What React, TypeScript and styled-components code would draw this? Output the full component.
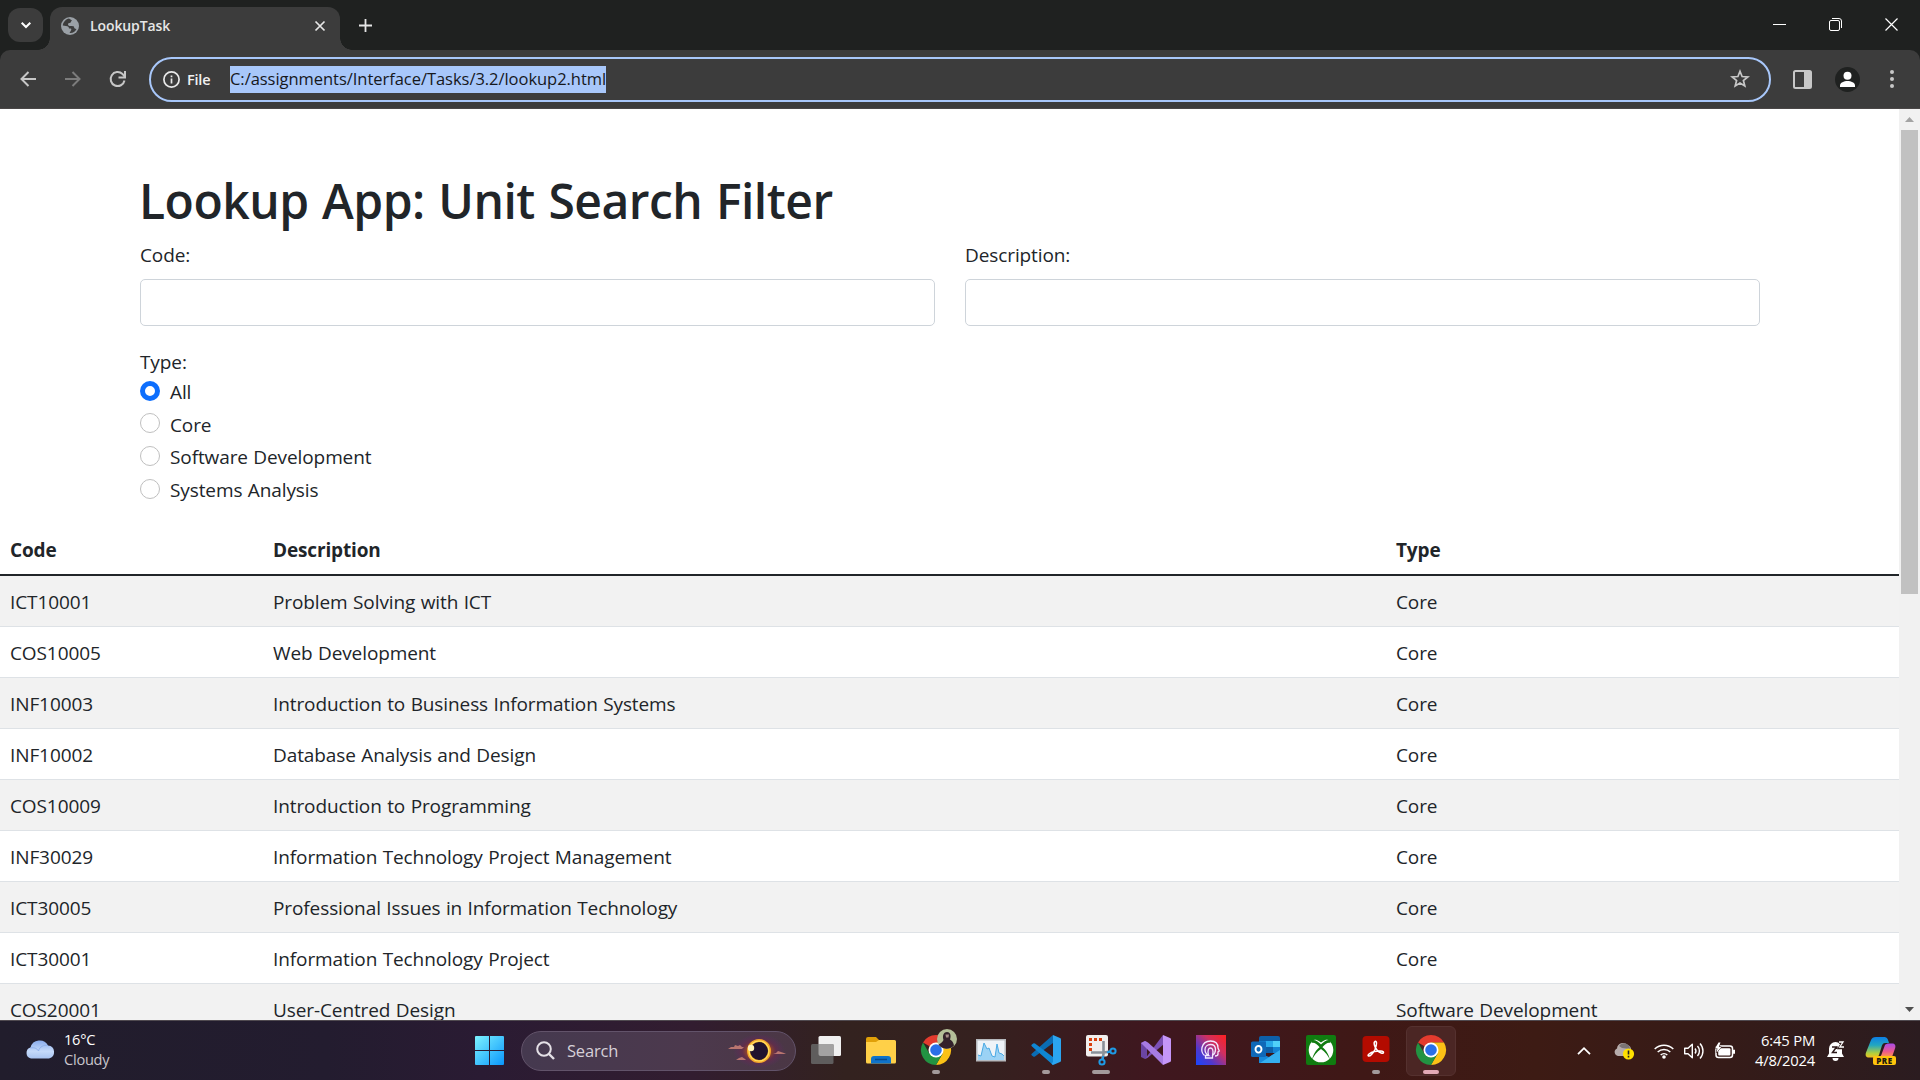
import React from "react";
import styled, { createGlobalStyle } from "styled-components";

const GlobalStyle = createGlobalStyle`
  *, *::before, *::after { box-sizing: border-box; }
  body { margin: 0; background: #fff; overflow: hidden; }
`;

const Screen = styled.div`
  width: 1920px;
  height: 1080px;
  display: grid;
  grid-template-rows: 50px 59px 911px 60px;
  overflow: hidden;
  background: #1f2120;
  font-family: "Open Sans", "Noto Sans", sans-serif;
  color: #212529;
`;

/* ---------- Browser chrome ---------- */

const TitleBar = styled.header`
  display: flex;
  align-items: flex-start;
  background: #1f2120;
  color: #e6e6e6;
`;

const TabSearch = styled.button`
  display: grid;
  place-items: center;
  width: 35px;
  height: 34px;
  margin: 8px 7px 0 8px;
  padding: 0;
  border: 0;
  border-radius: 12px;
  background: #3c3c3c;
  color: #fff;
`;

const Tab = styled.div`
  position: relative;
  display: flex;
  align-items: center;
  width: 290px;
  height: 43px;
  margin-top: 7px;
  padding: 0 15px 6px 11px;
  border-radius: 12px 12px 0 0;
  background: #3c3c3c;
  &::before, &::after {
    content: "";
    position: absolute;
    bottom: 0;
    width: 12px;
    height: 12px;
  }
  &::before { left: -12px; background: radial-gradient(circle at 0 0, transparent 11.5px, #3c3c3c 12px); }
  &::after { right: -12px; background: radial-gradient(circle at 100% 0, transparent 11.5px, #3c3c3c 12px); }
`;

const TabTitle = styled.span`
  flex: 1;
  margin-left: 11px;
  font-size: 14px;
  font-weight: 600;
  letter-spacing: -0.1px;
  line-height: 20px;
`;

const NewTab = styled.div`
  display: grid;
  place-items: center;
  width: 50px;
  height: 50px;
`;

const WindowControls = styled.div`
  display: flex;
  align-items: center;
  gap: 43px;
  height: 49px;
  margin-left: auto;
  padding-right: 22px;
`;

const Toolbar = styled.nav`
  display: flex;
  align-items: center;
  background: #3c3c3c;
  border-bottom: 1px solid #4a4747;
  border-radius: 10px 10px 0 0;
  color: #c7c7c7;
`;

const NavButtons = styled.div`
  display: flex;
  align-items: center;
  gap: 25px;
  width: 149px;
  padding-left: 18px;
`;

const Omnibox = styled.div`
  display: flex;
  align-items: center;
  width: 1622px;
  height: 45px;
  padding: 0 19px 0 12px;
  border: 2.5px solid #a8c7fa;
  border-radius: 23px;
`;

const Scheme = styled.span`
  width: 43px;
  margin-left: 7px;
  color: #f1f1f1;
  font-size: 14.5px;
  font-weight: 600;
  letter-spacing: -0.2px;
`;

const Url = styled.span`
  height: 27px;
  background: #a8c7fa;
  color: #16181c;
  font-size: 16.5px;
  letter-spacing: -0.04px;
  line-height: 26px;
  white-space: nowrap;
`;

const StarSlot = styled.span`
  display: flex;
  margin-left: auto;
`;

const Actions = styled.div`
  display: flex;
  align-items: center;
  flex: 1;
  padding-left: 22px;
`;

const Avatar = styled.span`
  display: grid;
  width: 25px;
  height: 25px;
  margin: 0 30px 0 23px;
  border-radius: 50%;
  background: #1f2120;
`;

/* ---------- Page ---------- */

const Viewport = styled.div`
  display: grid;
  grid-template-columns: 1899px 21px;
  min-height: 0;
`;

const Page = styled.main`
  overflow: hidden;
  background: #fff;
  font-size: 19px;
  line-height: 30px;
  letter-spacing: -0.1px;
  word-spacing: 0.6px;
`;

const Form = styled.section`
  padding: 62px 139px 0 140px;
`;

const Heading = styled.h1`
  margin: 0 0 9px -1px;
  font-size: 48px;
  font-weight: 600;
  letter-spacing: -0.5px;
  word-spacing: 1.6px;
  line-height: 60px;
`;

const FieldRow = styled.div`
  display: grid;
  grid-template-columns: 1fr 1fr;
  gap: 30px;
`;

const Field = styled.label`
  display: grid;
  gap: 9px;
`;

const TextInput = styled.input`
  width: 100%;
  height: 47px;
  border: 1px solid #ced4da;
  border-radius: 5px;
  background: #fff;
`;

const TypeGroup = styled.div`
  margin-top: 21px;
`;

const TypeLabel = styled.div`
  height: 29px;
`;

const Option = styled.label`
  display: flex;
  align-items: center;
  gap: 10px;
  height: 32.6px;
`;

const Radio = styled.span<{ $on?: boolean }>`
  width: 20px;
  height: 20px;
  margin-top: -3px;
  border: ${(p) => (p.$on ? "5px solid #0d6efd" : "1px solid #bfbfbf")};
  border-radius: 50%;
  background: #fff;
`;

const Table = styled.table`
  width: 100%;
  margin-top: 18px;
  border-collapse: separate;
  border-spacing: 0;
  table-layout: fixed;
`;

const HeadCell = styled.th<{ $w?: number }>`
  width: ${(p) => (p.$w ? `${p.$w}px` : "auto")};
  height: 52px;
  padding: 2px 10px 0;
  border-bottom: 2px solid #212529;
  font-weight: 700;
  text-align: left;
  letter-spacing: -0.15px;
`;

const BodyRow = styled.tr`
  &:nth-child(odd) { background: #f2f2f2; }
`;

const Cell = styled.td`
  height: 51px;
  padding: 2px 10px 0;
  border-bottom: 1px solid #dee2e6;
  white-space: nowrap;
`;

const ScrollTrack = styled.div`
  display: flex;
  flex-direction: column;
  align-items: center;
  background: #f1f1f1;
`;

const Thumb = styled.div`
  width: 17px;
  height: 464px;
  margin-bottom: auto;
  background: #c1c1c1;
`;

const ArrowSlot = styled.div`
  display: grid;
  place-items: center;
  height: 21px;
`;

/* ---------- Taskbar ---------- */

const Taskbar = styled.footer`
  display: grid;
  grid-template-columns: 462px 1fr auto;
  border-top: 1px solid #504a50;
  background: linear-gradient(90deg, #211d2c 0%, #231c2f 17%, #2a1b33 25%, #321d30 36%, #33221f 44%, #35211f 51%, #3f171f 60%, #3f1816 71%, #3d1b14 80%, #351b18 90%, #2b1c20 100%);
  color: #fff;
`;

const Weather = styled.div`
  display: flex;
  align-items: center;
  gap: 9px;
  padding: 0 0 3px 25px;
`;

const WeatherText = styled.div`
  font-size: 14.6px;
  line-height: 20px;
  letter-spacing: -0.25px;
`;

const Dim = styled.div`
  color: #c9c6cc;
`;

const Apps = styled.div`
  display: flex;
  align-items: center;
`;

const StartSlot = styled.span`
  display: grid;
  place-items: center;
  width: 55px;
`;

const SearchBox = styled.div`
  display: flex;
  align-items: center;
  width: 275px;
  height: 40px;
  margin: 0 2px 0 4px;
  padding: 0 8px 0 14px;
  border: 1px solid #62536a;
  border-radius: 20px;
  background: linear-gradient(90deg, #45394f, #4c394d 60%, #4b3745);
  color: #d6d0d8;
  font-size: 16.5px;
  letter-spacing: -0.2px;
`;

const SearchLabel = styled.span`
  flex: 1;
  margin-left: 12px;
`;

const AppButton = styled.span<{ $active?: boolean }>`
  display: flex;
  flex-direction: column;
  align-items: center;
  width: 50px;
  height: 50px;
  margin: 0 2.5px;
  padding-top: 8px;
  border: 1px solid ${(p) => (p.$active ? "#55312f" : "transparent")};
  border-radius: 6px;
  background: ${(p) => (p.$active ? "#4b2624" : "transparent")};
`;

const Indicator = styled.i<{ $w: number; $color?: string }>`
  width: ${(p) => p.$w}px;
  height: 4px;
  margin-top: 5px;
  border-radius: 2px;
  background: ${(p) => p.$color ?? "#a39a9b"};
`;

const Glyph = styled.svg`
  display: block;
  flex: none;
  overflow: visible;
`;

const Tray = styled.div`
  display: flex;
  align-items: center;
  padding-right: 24px;
`;

const TraySlot = styled.span<{ $w: number; $after?: number }>`
  display: grid;
  place-items: center;
  width: ${(p) => p.$w}px;
  margin-right: ${(p) => p.$after ?? 0}px;
`;

const Clock = styled.div`
  width: 75px;
  padding-bottom: 2px;
  font-size: 14.8px;
  line-height: 20px;
  letter-spacing: -0.2px;
  text-align: right;
  white-space: nowrap;
`;

/* ---------- Drawings ---------- */

const line = { fill: "none", stroke: "currentColor", strokeWidth: 2 } as const;

const ChromeLogo = ({ badge }: { badge?: boolean }) => (
  <Glyph width="30" height="30" viewBox="0 0 30 30">
    <path d="M15 15 2 7.5A15 15 0 0 1 28 7.5L15 7.5Z" fill="#e33b2e" />
    <path d="M15 7.5H28A15 15 0 0 1 15 30L21.5 18.7Z" fill="#fbc116" />
    <path d="M2 7.5A15 15 0 0 0 15 30L21.5 18.8 8.5 18.8Z" fill="#229342" />
    <circle cx="15" cy="15" r="7.5" fill="#fff" />
    <circle cx="15" cy="15" r="5.8" fill="#2a6fe8" />
    {badge && (
      <g>
        <circle cx="26" cy="4" r="10" fill="#b4bf98" />
        <path d="M17.500 9.500c2-.5 4-2.500 5-4.500-1.500-5 .5-8 3.500-8s4.500 3 3 7.500c2 1 3.500 3 4 6A10 10 0 0 1 17.500 9.500z" fill="#33212a" />
        <path d="M24.500-.5h3.500l-.5 3h-2.500z" fill="#a58c86" />
      </g>
    )}
  </Glyph>
);

const StartLogo = () => (
  <Glyph width="29" height="29" viewBox="0 0 29 29">
    <defs>
      <linearGradient id="win" x1="0" y1="0" x2="29" y2="29" gradientUnits="userSpaceOnUse">
        <stop stopColor="#7df3ff" />
        <stop offset="1" stopColor="#0a96fb" />
      </linearGradient>
    </defs>
    <path d="M0 1a1 1 0 0 1 1-1h13v14H0zM15 0h13a1 1 0 0 1 1 1v13H15zM0 15h14v14H1a1 1 0 0 1-1-1zM15 15h14v13a1 1 0 0 1-1 1H15z" fill="url(#win)" />
  </Glyph>
);

const Cloud = () => (
  <Glyph width="30" height="20" viewBox="0 0 30 20">
    <defs>
      <linearGradient id="cl" x1="0" y1="0" x2="0" y2="1">
        <stop stopColor="#8aaced" />
        <stop offset=".6" stopColor="#c5dafa" />
        <stop offset="1" stopColor="#a9c4f1" />
      </linearGradient>
    </defs>
    <path d="M6 19.5a5.700 5.700 0 0 1-.5-11A9.500 9.500 0 0 1 23 6.500a6.600 6.600 0 0 1 1 13z" fill="url(#cl)" />
    <path d="M5.500 9c4-1 7 1 8 3 1-4 5-6.500 9.500-5.500" fill="none" stroke="#8fb0ec" strokeWidth="1" />
  </Glyph>
);

const Eclipse = () => (
  <Glyph width="60" height="32" viewBox="0 0 60 32">
    <defs>
      <radialGradient id="glow">
        <stop offset=".4" stopColor="#a8501f" />
        <stop offset=".65" stopColor="#6a2a4a" stopOpacity=".7" />
        <stop offset="1" stopColor="#5a2a6a" stopOpacity="0" />
      </radialGradient>
    </defs>
    <ellipse cx="32" cy="16" rx="26" ry="17" fill="url(#glow)" />
    <circle cx="32" cy="16" r="10.500" fill="#21122e" stroke="#f4a52a" strokeWidth="3" />
    <circle cx="32" cy="16" r="10" fill="none" stroke="#ffe05e" strokeWidth="1.200" />
    <circle cx="24" cy="13" r="3.200" fill="#fff3b8" />
    <path d="M1 14l3-2h3l1-2 3 1 2-1 2 2h2l-2 2zM9 25l3-2 3-1 3 2 1 1zM46 19l3-1 2-2 3 1 3 1 2 1z" fill="#b9756f" />
  </Glyph>
);

const TaskView = () => (
  <Glyph width="30" height="30" viewBox="0 0 30 30">
    <rect x="7.500" y="1" width="22.500" height="20" rx="1.500" fill="#f0f0f0" />
    <rect x="0" y="9" width="22.500" height="20" rx="1.500" fill="#5f5d5d" />
    <path d="M7.500 9h15v12h-13a2 2 0 0 1-2-2z" fill="#a3a2a2" />
  </Glyph>
);

const Folder = () => (
  <Glyph width="30" height="30" viewBox="0 0 30 30">
    <path d="M0 4a2 2 0 0 1 2-2h8l3 3v4H0z" fill="#e0a008" />
    <path d="M0 7h10l3-2h15.500a1.500 1.500 0 0 1 1.500 1.500V27a1.500 1.500 0 0 1-1.500 1.500h-27A1.500 1.500 0 0 1 0 27z" fill="#ffd048" />
    <path d="M5 28.500V24a3 3 0 0 1 3-3h14a3 3 0 0 1 3 3v4.500z" fill="#0f73c9" />
    <path d="M9 24.500h12" stroke="#084a8c" strokeWidth="1.500" />
  </Glyph>
);

const PerfMonitor = () => (
  <Glyph width="30" height="30" viewBox="0 0 30 30">
    <rect x=".750" y="4.750" width="28.500" height="21" fill="#eef3f8" stroke="#b6b9bd" strokeWidth="1.500" />
    <path d="M2 25V20l3 1 3-13 3 6 2-1 3 8 3 1 2-13 2 9 3 1 2 2v4z" fill="#9bd2f5" />
    <path d="M2 20l3 1 3-13 3 6 2-1 3 8 3 1 2-13 2 9 3 1 2 2" fill="none" stroke="#4aa9e4" />
  </Glyph>
);

const VSCode = () => (
  <Glyph width="30" height="30" viewBox="0 0 30 30">
    <path d="M1 18.500 22 0v8L4 21.500q-1 .5-1.800 0L.6 20.200q-.8-.8.4-1.700z" fill="#0a6cb4" />
    <path d="M1 11.500 22 30v-8L4 8.500q-1-.5-1.800 0L.6 9.800q-.8.800.4 1.700z" fill="#0f86d2" />
    <path d="M22 0l7 3a1.500 1.500 0 0 1 1 1.500v21a1.500 1.500 0 0 1-1 1.500l-7 3-1.500-1.200L22 27z" fill="#2ba5f0" />
  </Glyph>
);

const Snip = () => (
  <Glyph width="30" height="30" viewBox="0 0 30 30">
    <rect width="22" height="21.500" rx="2" fill="#f1efee" />
    <path d="M3 3h3v3H3zM8 3h3v3H8zM13 3h3v3h-3zM3 8h3v3H3zM3 13h3v3H3z" fill="#d8400f" />
    <path d="M17.500 6v13l-1 5M5 17.500h13l6-1" fill="none" stroke="#8a9199" strokeWidth="2.600" />
    <circle cx="27" cy="16" r="2.600" fill="none" stroke="#1e9be6" strokeWidth="2" />
    <circle cx="16" cy="27" r="2.600" fill="none" stroke="#1e9be6" strokeWidth="2" />
    <path d="M21 17.500l3-1M17.500 21l-1 3" stroke="#1e9be6" strokeWidth="2" />
  </Glyph>
);

const VisualStudio = () => (
  <Glyph width="30" height="30" viewBox="0 0 30 30">
    <path d="M0 8l4-2 2 1v16l-2 1-4-2z" fill="#6b45a3" />
    <path d="M4 24 22 0l1 9L7 22.500z" fill="#7b50b5" />
    <path d="M0 8l4-2 3 1.500L22 21v9z" fill="#a77be2" />
    <path d="M22 0l7 3a1.500 1.500 0 0 1 1 1.500v21a1.500 1.500 0 0 1-1 1.500l-7 3z" fill="#c596f8" />
  </Glyph>
);

const Assistant = () => (
  <Glyph width="30" height="30" viewBox="0 0 30 30">
    <defs>
      <linearGradient id="as" x1="0" y1="30" x2="30" y2="0" gradientUnits="userSpaceOnUse">
        <stop stopColor="#1746ff" />
        <stop offset=".3" stopColor="#5038cc" />
        <stop offset=".65" stopColor="#d03060" />
        <stop offset="1" stopColor="#ff2020" />
      </linearGradient>
    </defs>
    <path d="M0 0h30v30H0z" fill="url(#as)" />
    <path d="M8.500 20.500C5.500 18 5.500 15 6 12.500 7 8.500 10.500 6 14.500 6 19.500 6 22 9 22 13l1.300 3-1.300.8v2.200c0 1.500-1 2-3 2M12.500 23h-3v-2.500h3c-2.500-1.500-3.500-4-3.500-6 0-3 2.500-5 5.500-5s5 2 5 5c0 2.500-1 4.500-3 6v2.500h-4M12.500 20.500c-1.500-6 .5-7.500 2-7.500s3.500 1.500 2 7.500" fill="none" stroke="#f3e8ff" strokeWidth="1.300" />
  </Glyph>
);

const Outlook = () => (
  <Glyph width="30" height="30" viewBox="0 0 30 30">
    <path d="M8 3a2 2 0 0 1 2-2h17a2 2 0 0 1 2 2v15H8z" fill="#0d5fa8" />
    <path d="M8 6h7v6H8zM22 12h7v6h-7z" fill="#1482d3" />
    <path d="M15 6h7v6h-7z" fill="#28a8ea" />
    <path d="M22 6h7v6h-7z" fill="#50d0f8" />
    <path d="M8 28V18l10 4 11-7v12a1 1 0 0 1-1 1z" fill="#1688d8" />
    <path d="M29 15v12a1 1 0 0 1-1 1H9z" fill="#35b0f0" />
    <rect x="0" y="6.500" width="15" height="15.500" rx="1.500" fill="#0f68b8" />
    <ellipse cx="7.500" cy="14.300" rx="3" ry="3.300" fill="none" stroke="#fff" strokeWidth="1.900" />
  </Glyph>
);

const Xbox = () => (
  <Glyph width="30" height="30" viewBox="0 0 30 30">
    <rect width="30" height="30" rx="2" fill="#107c10" />
    <circle cx="15" cy="15" r="12.300" fill="#fff" />
    <path d="M7.500 4.500C10 4 13 6 15 7.500 17 6 20 4 22.500 4.500 19 1 11 1 7.500 4.500z" fill="#107c10" />
    <path d="M6 25.500C7 18.500 11 14 15 11c4 3 8 7.500 9 14.500C22.500 20.500 19 17 15 14 11 17 7.500 20.500 6 25.500z" fill="#107c10" />
    <path d="M5.500 6.500C9 5.500 12.500 8.500 15 11.500M24.500 6.500C21 5.500 17.500 8.500 15 11.500" fill="none" stroke="#107c10" strokeWidth="2.800" />
  </Glyph>
);

const Acrobat = () => (
  <Glyph width="28" height="30" viewBox="0 0 28 30">
    <rect x=".5" y="1" width="27" height="26" rx="4" fill="#b30b00" />
    <path d="M13 6.500c2-1 2 3 0 8-2 4-5 7-6.500 6.500s1-3.500 6-4.500c5-1 9-.5 9 1s-4 .5-6.500-2.500-3.800-7.500-2-8.500z" fill="none" stroke="#fff" strokeWidth="1.500" />
  </Glyph>
);

const OneDrive = () => (
  <Glyph width="20" height="18" viewBox="0 0 20 18">
    <path d="M4 14a4 4 0 0 1-1-7.600A6 6 0 0 1 13.500 3 5 5 0 0 1 17 8l-6 6z" fill="#b6acab" />
    <path d="M5 4a6 6 0 0 1 11 3l-8-1z" fill="#7b7474" />
    <circle cx="14.500" cy="12" r="5.600" fill="#ffe000" />
    <path d="M14.500 8.500v4M14.500 13.800v1.700" stroke="#222" strokeWidth="1.600" />
  </Glyph>
);

const Wifi = () => (
  <Glyph width="20" height="16" viewBox="0 0 20 16">
    <path d="M.7 6a13.200 13.200 0 0 1 18.600 0M3.700 9a9 9 0 0 1 12.600 0M6.700 12a4.800 4.800 0 0 1 6.600 0" {...line} strokeWidth={1.5} />
    <circle cx="10" cy="14" r="1.800" fill="currentColor" />
  </Glyph>
);

const Volume = () => (
  <Glyph width="20" height="18" viewBox="0 0 20 18">
    <path d="M.700 6.300h3.300L8.300 2.300v13.500L4 11.800H.7z M11 6.500a4 4 0 0 1 0 5M13.500 4a7.500 7.500 0 0 1 0 10M16 1.500a11 11 0 0 1 0 15" {...line} strokeWidth={1.400} strokeLinejoin="round" />
  </Glyph>
);

const Battery = () => (
  <Glyph width="20" height="16" viewBox="0 0 20 16">
    <rect x="1" y="3" width="16.500" height="11.500" rx="2.500" {...line} strokeWidth={1.500} />
    <rect x="3.200" y="5.200" width="12.200" height="7.200" rx="1" fill="currentColor" />
    <path d="M19 6.800v4" stroke="currentColor" strokeWidth="2" />
    <path d="M3.500-.5 0 5.500h2.500L1.300 10 6.300 4H3.800L5.500-.5z" fill="currentColor" stroke="#351b18" strokeWidth="1" paintOrder="stroke" />
  </Glyph>
);

const Bell = () => (
  <Glyph width="18" height="20" viewBox="0 0 18 20">
    <path d="M2 7.500a6.500 6.500 0 0 1 13 0v5L17 16H0l2-3.500zM5.500 17h6a3 3 0 0 1-6 0z" fill="currentColor" />
    <path d="M12 1H16.500L13 6.500H17" fill="none" stroke="#33201f" strokeWidth="3.400" />
    <path d="M12 1H16L12.800 6H17" fill="none" stroke="#fff" strokeWidth="1.300" />
    <path d="M5 6H9.500L5.500 11.500H10M9 5.500l1.500 2" fill="none" stroke="#2e1a1b" strokeWidth="1.500" />
  </Glyph>
);

const PreTag = styled.span`
  position: absolute;
  left: 7px;
  top: 19px;
  width: 23px;
  height: 9px;
  border-radius: 2px;
  background: #ffc40c;
  color: #201a10;
  font-size: 8px;
  font-weight: 800;
  line-height: 9px;
  letter-spacing: 0.6px;
  text-align: center;
`;

const CopilotBox = styled.span`
  position: relative;
  width: 30px;
  height: 28px;
`;

const Copilot = () => (
  <CopilotBox>
    <Glyph width="30" height="30" viewBox="0 0 30 30">
      <defs>
        <linearGradient id="ca" x1="0" y1="0" x2="0" y2="1">
          <stop stopColor="#0d7fe6" />
          <stop offset=".4" stopColor="#22a7c0" />
          <stop offset=".8" stopColor="#b5cf3a" />
          <stop offset="1" stopColor="#f0c020" />
        </linearGradient>
        <linearGradient id="cb" x1="0" y1="0" x2="0" y2="1">
          <stop stopColor="#a84be8" />
          <stop offset=".6" stopColor="#ee5a8c" />
          <stop offset="1" stopColor="#ff9a4a" />
        </linearGradient>
      </defs>
      <path d="M5 3c1-2 2-3 5-3h8c3 0 4 2 5 6h-4c-2 0-3 2-3.500 4L13 18c-1 2-2 2.500-4 2.500H3c-3 0-4-2-3-5z" fill="url(#ca)" />
      <path d="M19 8c1-1 2-1.500 4-1.500h3c3 0 4 2 3 5L26 20h-13c2-1 2.500-2 3-4z" fill="url(#cb)" />
    </Glyph>
    <PreTag>PRE</PreTag>
  </CopilotBox>
);

/* ---------- Data ---------- */

const units: [string, string, string][] = [
  ["ICT10001", "Problem Solving with ICT", "Core"],
  ["COS10005", "Web Development", "Core"],
  ["INF10003", "Introduction to Business Information Systems", "Core"],
  ["INF10002", "Database Analysis and Design", "Core"],
  ["COS10009", "Introduction to Programming", "Core"],
  ["INF30029", "Information Technology Project Management", "Core"],
  ["ICT30005", "Professional Issues in Information Technology", "Core"],
  ["ICT30001", "Information Technology Project", "Core"],
  ["COS20001", "User-Centred Design", "Software Development"],
];

const types = ["All", "Core", "Software Development", "Systems Analysis"];

const apps: { icon: React.ReactNode; bar?: number; active?: boolean }[] = [
  { icon: <TaskView /> },
  { icon: <Folder /> },
  { icon: <ChromeLogo badge />, bar: 8 },
  { icon: <PerfMonitor /> },
  { icon: <VSCode />, bar: 8 },
  { icon: <Snip />, bar: 18 },
  { icon: <VisualStudio /> },
  { icon: <Assistant /> },
  { icon: <Outlook /> },
  { icon: <Xbox /> },
  { icon: <Acrobat />, bar: 8 },
  { icon: <ChromeLogo />, bar: 16, active: true },
];

export default function App() {
  return (
    <Screen>
      <GlobalStyle />
      <TitleBar>
        <TabSearch>
          <Glyph width="10" height="6" viewBox="0 0 10 6"><path d="M.700.700 5 5 9.300.700" {...line} /></Glyph>
        </TabSearch>
        <Tab>
          <Glyph width="18" height="18" viewBox="0 0 18 18">
            <circle cx="9" cy="9" r="9" fill="#9aa0a6" />
            <path d="M8 1.500C5 2 2 5 1.800 8.500L5 9c2 0 3 1 3 2.500h1.500c1 0 1 1 .5 2L8.500 16c3 .5 5.500-1 7-4-2 0-2.500-1-2.500-2.500-1-1-3-.5-4.500-.5-2-.5-2-3 0-3C10 6 10 4 11 3.500z" fill="#3c3c3c" />
          </Glyph>
          <TabTitle>LookupTask</TabTitle>
          <Glyph width="10" height="10" viewBox="0 0 10 10"><path d="M.5.5l9 9M9.500.5l-9 9" {...line} strokeWidth={1.700} /></Glyph>
        </Tab>
        <NewTab>
          <Glyph width="13" height="13" viewBox="0 0 13 13"><path d="M6.500 0v13M0 6.500h13" {...line} strokeWidth={1.800} /></Glyph>
        </NewTab>
        <WindowControls>
          <Glyph width="13" height="13" viewBox="0 0 13 13"><path d="M0 6.500h13" {...line} stroke="#fff" strokeWidth={1} /></Glyph>
          <Glyph width="13" height="13" viewBox="0 0 13 13">
            <path d="M3 .5h7a2.500 2.500 0 0 1 2.500 2.500v7" {...line} stroke="#fff" strokeWidth={1} />
            <rect x=".5" y="2.500" width="10" height="10" rx="1.500" {...line} stroke="#fff" strokeWidth={1} />
          </Glyph>
          <Glyph width="13" height="13" viewBox="0 0 13 13"><path d="M.5.5l12 12M12.500.5l-12 12" {...line} stroke="#fff" strokeWidth={1.200} /></Glyph>
        </WindowControls>
      </TitleBar>

      <Toolbar>
        <NavButtons>
          <Glyph width="20" height="20" viewBox="0 0 20 20"><path d="M18 10H4M10.500 3 3.500 10l7 7" {...line} /></Glyph>
          <Glyph width="20" height="20" viewBox="0 0 20 20"><path d="M2 10h14M9.500 3l7 7-7 7" {...line} stroke="#7c7c7c" /></Glyph>
          <Glyph width="20" height="20" viewBox="0 0 20 20"><path d="M16.500 11.500A7 7 0 1 1 14.500 5l2 2.500" {...line} /><path d="M17 2v6.500h-6.500" {...line} /></Glyph>
        </NavButtons>
        <Omnibox>
          <Glyph width="17" height="17" viewBox="0 0 17 17">
            <circle cx="8.500" cy="8.500" r="7.600" fill="none" stroke="#e8e8e8" strokeWidth="1.700" />
            <path d="M8.500 7.500v5M8.500 4.500v1.800" stroke="#e8e8e8" strokeWidth="1.700" />
          </Glyph>
          <Scheme>File</Scheme>
          <Url>C:/assignments/Interface/Tasks/3.2/lookup2.html</Url>
          <StarSlot>
            <Glyph width="20" height="20" viewBox="0 0 20 20">
              <path d="M10 2.300l2.100 5.200 5.700.4-4.400 3.600 1.400 5.500L10 14l-4.800 3 1.400-5.500L2.200 7.900l5.700-.4z" {...line} strokeWidth={1.700} />
            </Glyph>
          </StarSlot>
        </Omnibox>
        <Actions>
          <Glyph width="19" height="19" viewBox="0 0 19 19">
            <rect x="1" y="1" width="17" height="17" rx="1.500" {...line} />
            <path d="M11 1h7v17h-7z" fill="currentColor" />
          </Glyph>
          <Avatar>
            <Glyph width="25" height="25" viewBox="0 0 25 25">
              <circle cx="12.500" cy="8.700" r="4" fill="#fff" />
              <path d="M5 20v-1.500c0-3 4-4.500 7.500-4.500s7.500 1.500 7.500 4.500V20z" fill="#fff" />
            </Glyph>
          </Avatar>
          <Glyph width="4" height="18" viewBox="0 0 4 18">
            <circle cx="2" cy="2" r="2" fill="currentColor" />
            <circle cx="2" cy="9" r="2" fill="currentColor" />
            <circle cx="2" cy="16" r="2" fill="currentColor" />
          </Glyph>
        </Actions>
      </Toolbar>

      <Viewport>
        <Page>
          <Form>
            <Heading>Lookup App: Unit Search Filter</Heading>
            <FieldRow>
              <Field>Code:<TextInput /></Field>
              <Field>Description:<TextInput /></Field>
            </FieldRow>
            <TypeGroup>
              <TypeLabel>Type:</TypeLabel>
              {types.map((t, i) => (
                <Option key={t}><Radio $on={i === 0} />{t}</Option>
              ))}
            </TypeGroup>
          </Form>
          <Table>
            <thead>
              <tr>
                <HeadCell $w={263}>Code</HeadCell>
                <HeadCell $w={1123}>Description</HeadCell>
                <HeadCell>Type</HeadCell>
              </tr>
            </thead>
            <tbody>
              {units.map(([code, description, type]) => (
                <BodyRow key={code}>
                  <Cell>{code}</Cell>
                  <Cell>{description}</Cell>
                  <Cell>{type}</Cell>
                </BodyRow>
              ))}
            </tbody>
          </Table>
        </Page>
        <ScrollTrack>
          <ArrowSlot><Glyph width="9" height="5" viewBox="0 0 9 5"><path d="M0 5 4.500 0 9 5z" fill="#a3a3a3" /></Glyph></ArrowSlot>
          <Thumb />
          <ArrowSlot><Glyph width="9" height="5" viewBox="0 0 9 5"><path d="M0 0 4.500 5 9 0z" fill="#505050" /></Glyph></ArrowSlot>
        </ScrollTrack>
      </Viewport>

      <Taskbar>
        <Weather>
          <Cloud />
          <WeatherText>
            <div>16°C</div>
            <Dim>Cloudy</Dim>
          </WeatherText>
        </Weather>
        <Apps>
          <StartSlot><StartLogo /></StartSlot>
          <SearchBox>
            <Glyph width="19" height="19" viewBox="0 0 19 19">
              <circle cx="8" cy="8" r="6.800" {...line} stroke="#e4e0e6" />
              <path d="M13 13l5 5" stroke="#e4e0e6" strokeWidth="2.400" />
            </Glyph>
            <SearchLabel>Search</SearchLabel>
            <Eclipse />
          </SearchBox>
          {apps.map((a, i) => (
            <AppButton key={i} $active={a.active}>
              {a.icon}
              {a.bar && <Indicator $w={a.bar} $color={a.active ? "#e3a9b5" : undefined} />}
            </AppButton>
          ))}
        </Apps>
        <Tray>
          <TraySlot $w={30}><Glyph width="14" height="8" viewBox="0 0 14 8"><path d="M1 7.200 7 1.200l6 6" {...line} strokeWidth={1.800} /></Glyph></TraySlot>
          <TraySlot $w={50}><OneDrive /></TraySlot>
          <TraySlot $w={30}><Wifi /></TraySlot>
          <TraySlot $w={30}><Volume /></TraySlot>
          <TraySlot $w={31}><Battery /></TraySlot>
          <Clock>
            <div>6:45 PM</div>
            <div>4/8/2024</div>
          </Clock>
          <TraySlot $w={41} $after={10}><Bell /></TraySlot>
          <Copilot />
        </Tray>
      </Taskbar>
    </Screen>
  );
}
